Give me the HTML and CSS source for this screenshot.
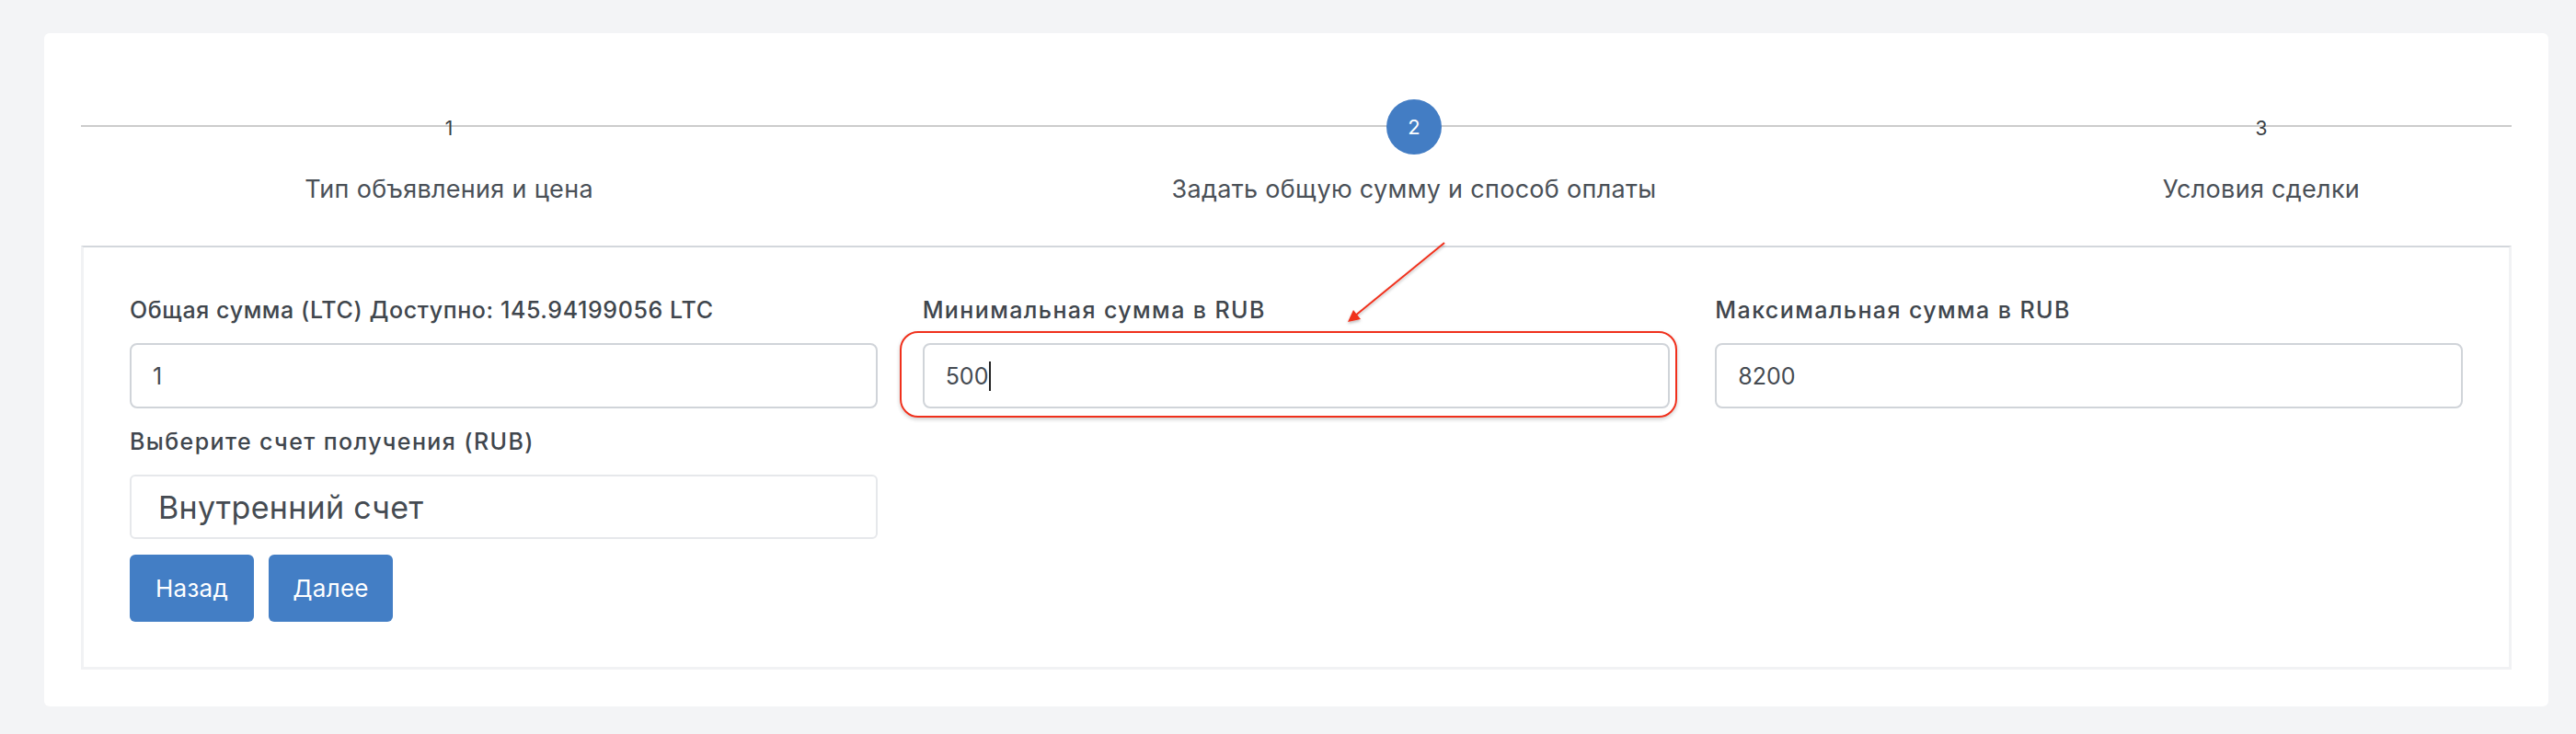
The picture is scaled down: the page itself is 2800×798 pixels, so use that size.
FILE: index.html
```html
<!DOCTYPE html>
<html lang="ru">
<head>
<meta charset="utf-8">
<title>Создание объявления</title>
<link rel="stylesheet" href="styles.css">
</head>
<body>
<div class="page">
  <div class="card">
    <div class="steps">
      <div class="step">
        <div class="step-marker"><span class="step-num">1</span></div>
        <div class="step-title">Тип объявления и цена</div>
      </div>
      <div class="step">
        <div class="step-marker"><span class="step-num step-num--active">2</span></div>
        <div class="step-title">Задать общую сумму и способ оплаты</div>
      </div>
      <div class="step">
        <div class="step-marker"><span class="step-num">3</span></div>
        <div class="step-title">Условия сделки</div>
      </div>
    </div>

    <div class="panel">
      <div class="form-grid">
        <div class="col">
          <label class="field-label">Общая сумма (LTC) Доступно: 145.94199056 LTC</label>
          <div class="input">1</div>
          <label class="field-label field-label--second">Выберите счет получения (RUB)</label>
          <div class="select">Внутренний счет</div>
          <div class="buttons">
            <button class="btn">Назад</button>
            <button class="btn">Далее</button>
          </div>
        </div>
        <div class="col">
          <label class="field-label field-label--wide">Минимальная сумма в RUB</label>
          <div class="input-wrap">
            <div class="input">500<span class="caret"></span></div>
            <div class="highlight"></div>
          </div>
        </div>
        <div class="col">
          <label class="field-label field-label--wide">Максимальная сумма в RUB</label>
          <div class="input">8200</div>
        </div>
      </div>
    </div>
  </div>

  <svg class="arrow" width="130" height="110" viewBox="0 0 130 110">
    <defs>
      <filter id="sh" x="-20%" y="-20%" width="140%" height="140%">
        <feDropShadow dx="0" dy="2" stdDeviation="1.5" flood-color="#000" flood-opacity="0.25"/>
      </filter>
    </defs>
    <g filter="url(#sh)">
      <line x1="120" y1="9" x2="22" y2="89" stroke="#f0301c" stroke-width="2"/>
      <polygon points="15,95 21,82 29,92" fill="#f0301c"/>
    </g>
  </svg>
</div>
</body>
</html>
```

FILE: styles.css
```css
* { box-sizing: border-box; }

html, body {
  margin: 0;
  padding: 0;
}

body {
  background: #f3f4f6;
  font-family: "Inter", "Open Sans", "Noto Sans", sans-serif;
  color: #41474e;
}

.page {
  position: relative;
  padding: 36px 30px 30px 48px;
  height: 798px;
}

.card {
  background: #ffffff;
  border-radius: 6px;
  height: 732px;
  padding: 0 40px 40px 40px;
}

/* Steps */
.steps {
  position: relative;
  display: grid;
  grid-template-columns: 800fr 1298fr 544fr;
  padding-top: 72px;
}

.steps::before {
  content: "";
  position: absolute;
  left: 0;
  right: 0;
  top: 100px;
  height: 2px;
  background: #cccccc;
}

.step {
  position: relative;
  display: flex;
  flex-direction: column;
  align-items: center;
}

.step-marker {
  height: 60px;
  display: flex;
  align-items: center;
  justify-content: center;
}

.step-num {
  font-size: 21px;
  line-height: 24px;
  color: #3a3f45;
  padding-top: 4px;
}

.step-num--active {
  width: 60px;
  height: 60px;
  border-radius: 50%;
  background: #437dc4;
  color: #ffffff;
  display: flex;
  align-items: center;
  justify-content: center;
  padding-top: 0;
  font-size: 22px;
}

.step-title {
  margin-top: 20px;
  font-size: 27px;
  line-height: 36px;
  color: #4a5057;
  white-space: nowrap;
  letter-spacing: 0.3px;
}

/* Panel */
.panel {
  margin-top: 43px;
  border-top: 2px solid #d3d7dc;
  border-left: 3px solid #f1f2f4;
  border-right: 3px solid #f1f2f4;
  border-bottom: 3px solid #f1f2f4;
  height: 461px;
  padding: 51px 50px 0 50px;
}

.form-grid {
  display: grid;
  grid-template-columns: repeat(3, 1fr);
  column-gap: 49px;
  align-items: start;
}

.col {
  display: flex;
  flex-direction: column;
}

.field-label {
  display: block;
  font-size: 25px;
  line-height: 34px;
  font-weight: 500;
  color: #40464d;
  margin-bottom: 19px;
  white-space: nowrap;
  letter-spacing: 0.6px;
}

.field-label--wide {
  letter-spacing: 1.4px;
}

.field-label--second {
  margin-top: 19px;
  letter-spacing: 1.4px;
}

.input-wrap {
  position: relative;
}

.input {
  height: 71px;
  border: 2px solid #d0d4d9;
  border-radius: 8px;
  padding-left: 23px;
  display: flex;
  align-items: center;
  font-size: 25px;
  color: #454b52;
  background: #ffffff;
}

.caret {
  display: inline-block;
  width: 1.5px;
  height: 32px;
  background: #222;
  margin-left: 1px;
}

.highlight {
  position: absolute;
  top: -13px;
  left: -25px;
  right: -8px;
  bottom: -10px;
  border: 2px solid #f0301c;
  border-radius: 20px;
  box-shadow: 0 2px 4px rgba(0, 0, 0, 0.2);
  pointer-events: none;
}

.select {
  height: 70px;
  border: 2px solid #e6e8eb;
  border-radius: 6px;
  padding-left: 29px;
  display: flex;
  align-items: center;
  font-size: 34px;
  color: #454b52;
  letter-spacing: 0.3px;
}

.buttons {
  display: flex;
  gap: 16px;
  margin-top: 17px;
}

.btn {
  height: 73px;
  width: 135px;
  border: none;
  border-radius: 6px;
  background: #437ec5;
  color: #ffffff;
  font-family: inherit;
  font-size: 26px;
  padding: 0;
  letter-spacing: 0.3px;
}

.arrow {
  position: absolute;
  left: 1450px;
  top: 255px;
}
```
